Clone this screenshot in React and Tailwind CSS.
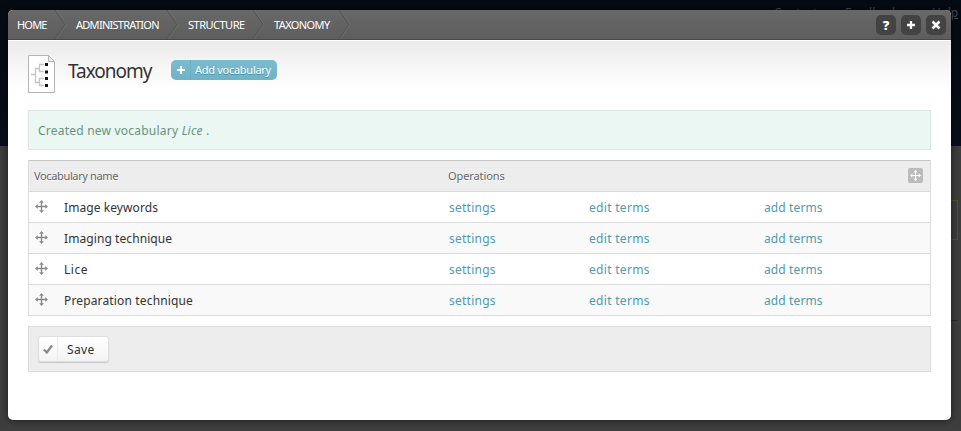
import React from "react";

const crumbs = [
  { label: "HOME", box: "w-[47px] pl-[9px]", text: "tracking-[-0.8px]" },
  { label: "ADMINISTRATION", box: "w-[112px] pl-[21px]", text: "tracking-[-0.72px]" },
  { label: "STRUCTURE", box: "w-[86px] pl-[21px]", text: "tracking-[-0.5px]" },
  { label: "TAXONOMY", box: "w-[86px] pl-[21px]", text: "tracking-[-0.6px]" },
];

const rows = [
  { name: "Image keywords", text: "tracking-[0.08px]" },
  { name: "Imaging technique", text: "tracking-[0.08px]" },
  { name: "Lice", text: "tracking-[0.5px]" },
  { name: "Preparation technique", text: "tracking-[0.15px]" },
];

function MoveIcon({ className }) {
  return (
    <svg width="13" height="13" viewBox="0 0 13 13" className={className}>
      <path d="M6.5 1v11M1 6.5h11" stroke="currentColor" strokeWidth="1.400" fill="none" />
      <path
        d="M6.5 0 8.8 2.800H4.200zM6.500 13 4.200 10.200h4.600zM0 6.500 2.800 4.200v4.600zM13 6.500 10.200 8.800V4.200z"
        fill="currentColor"
      />
    </svg>
  );
}

function Chevron() {
  return (
    <svg width="12" height="29" viewBox="0 0 12 29" className="shrink-0">
      <path d="M0 0 10 14.5 0 29" stroke="#545454" fill="none" />
      <path d="M1.2 0 11.2 14.5 1.2 29" stroke="#727272" fill="none" strokeWidth="0.7" />
    </svg>
  );
}

function TaxonomyIcon() {
  return (
    <svg width="27" height="38" viewBox="0 0 27 38">
      <path d="M.5.5H20.500L26.500 6.500V37.500H.5z" fill="#fff" stroke="#b4b4b4" />
      <path d="M20.500.5V6.500H26.500z" fill="#eee" stroke="#b4b4b4" />
      <path
        d="M3 19.500H7.500M16 9.500H11.500V16.500H16M16 23.500H11.500V30.500H16M11.500 13.500H7.500V27.500H11.500"
        stroke="#c4c4c4"
        fill="none"
        strokeWidth="1.300"
      />
      <path d="M17 8h3v3h-3zM17 15.500h3v3h-3zM17 22h3v3h-3zM17 29h3v3h-3z" fill="#111" />
    </svg>
  );
}

function ToolButton({ children }) {
  return (
    <button className="grid size-5 place-items-center rounded-[5px] bg-[#434343] text-white">
      {children}
    </button>
  );
}

export default function App() {
  return (
    <div className="relative h-[431px] w-[961px] overflow-hidden bg-[#3e3e3e] font-['Noto_Sans',sans-serif] text-[12px]">
      <div className="relative h-[146px] bg-gradient-to-b from-[#060a12] to-[#080e1c]">
        <div className="absolute right-[3px] top-[5px] flex text-[12px] leading-4 text-[#454a53] underline">
          <span className="w-[71px]">Contact</span>
          <span className="w-[87px]">Feedback</span>
          <span className="w-[26px]">Help</span>
        </div>
      </div>
      <div className="absolute right-[3px] top-[200px] h-10 w-5 border border-[#4a5533]" />
      <div className="absolute right-[3px] top-[320px] h-px w-5 bg-[#2c2c2c]" />

      <main className="absolute left-2 top-[10px] flex h-[410px] w-[943px] flex-col overflow-hidden rounded-[5px] bg-white shadow-[0_0_9px_rgba(0,0,0,0.6)]">
        <header className="flex h-[30px] shrink-0 border-b border-[#484848] bg-gradient-to-b from-[#686868] to-[#5e5e5e]">
          <nav className="flex flex-1 text-[11px] leading-[29px] text-white">
            {crumbs.map((c) => (
              <div key={c.label} className="flex">
                <span className={`shrink-0 whitespace-nowrap ${c.box} ${c.text}`}>{c.label}</span>
                <div className="-mr-3">
                  <Chevron />
                </div>
              </div>
            ))}
          </nav>
          <div className="flex items-center gap-[5px] pr-[5px]">
            <ToolButton>
              <span className="text-[13px] font-black leading-5">?</span>
            </ToolButton>
            <ToolButton>
              <svg width="10" height="10" viewBox="0 0 10 10">
                <path d="M5 1v8M1 5h8" stroke="white" strokeWidth="2.300" />
              </svg>
            </ToolButton>
            <ToolButton>
              <svg width="10" height="10" viewBox="0 0 10 10">
                <path d="M1.500 1.500l7 7M8.500 1.500l-7 7" stroke="white" strokeWidth="2.500" />
              </svg>
            </ToolButton>
          </div>
        </header>

        <section className="flex h-[70px] shrink-0 items-start border-t border-white bg-[linear-gradient(#ebebeb,#ffffff_48px)] pl-5">
          <div className="pt-[14px]">
            <TaxonomyIcon />
          </div>
          <h1 className="ml-[13px] w-[103px] whitespace-nowrap pt-[17px] text-[19px] leading-[26px] tracking-[-1px] text-[#333]">
            Taxonomy
          </h1>
          <button className="mt-[19px] flex h-5 w-[106px] items-center rounded-[5px] bg-gradient-to-b from-[#7abdcf] to-[#6fb3c6] text-white">
            <span className="grid h-5 w-5 place-items-center border-r border-[#69abc0]">
              <svg width="8" height="8" viewBox="0 0 8 8">
                <path d="M4 0v8M0 4h8" stroke="white" strokeWidth="2" />
              </svg>
            </span>
            <span className="whitespace-nowrap pl-1 text-[11px] leading-5 tracking-[-0.28px] [text-shadow:0_1px_0_#4191a8]">
              Add vocabulary
            </span>
          </button>
        </section>

        <div className="mx-5 h-10 shrink-0 border border-[#d6e9e3] bg-[#eaf7f3] pl-[9px] leading-[39px] tracking-[0.22px] text-[#6b9280]">
          Created new vocabulary <em>Lice</em> .
        </div>

        <div className="mx-5 mt-[10px] shrink-0 border-x border-[#dcdcdc]">
          <div className="flex h-8 border-b border-t border-b-[#dadada] border-t-[#c6c6c6] bg-[#ededed] pl-[5px] text-[11px] leading-[30px] text-[#666] [text-shadow:0_1px_0_white]">
            <span className="w-[414px] tracking-[-0.36px]">Vocabulary name</span>
            <span className="flex-1 tracking-[-0.1px]">Operations</span>
            <span className="mr-[7px] mt-[7px] grid size-[15px] place-items-center rounded-[2px] bg-[#bbb]">
              <MoveIcon className="size-[11px] text-white" />
            </span>
          </div>
          {rows.map((r) => (
            <div
              key={r.name}
              className="flex h-[31px] border-b border-[#dcdcdc] pl-[6px] leading-[31px] text-[#333] even:bg-white odd:bg-[#f9f9f9]"
            >
              <span className="w-[29px] pt-[8px]">
                <MoveIcon className="text-[#8a8a8a]" />
              </span>
              <span className={`w-[385px] ${r.text}`}>{r.name}</span>
              <a className="w-[140px] tracking-[0.25px] text-[#4f9aaf]">settings</a>
              <a className="w-[175px] tracking-[0.3px] text-[#4f9aaf]">edit terms</a>
              <a className="tracking-[0.12px] text-[#4f9aaf]">add terms</a>
            </div>
          ))}
        </div>

        <footer className="mx-5 mt-[10px] h-[46px] shrink-0 border border-[#dcdcdc] bg-[#ededed] pl-[9px] pt-[9px]">
          <button className="flex h-[26px] w-[71px] items-center rounded-[3px] border border-[#dedede] bg-gradient-to-b from-white to-[#f3f3f3] shadow-[0_1px_1px_#c6c6c6]">
            <span className="grid h-6 w-[19px] place-items-center border-r border-[#ececec]">
              <svg width="10" height="10" viewBox="0 0 10 10">
                <path d="M.8 5.500 3.800 8.500 9 1.500" stroke="#888" strokeWidth="2.200" fill="none" />
              </svg>
            </span>
            <span className="pl-[9px] pt-px text-[12px] leading-6 tracking-[0.4px] text-[#333]">Save</span>
          </button>
        </footer>
      </main>
    </div>
  );
}
